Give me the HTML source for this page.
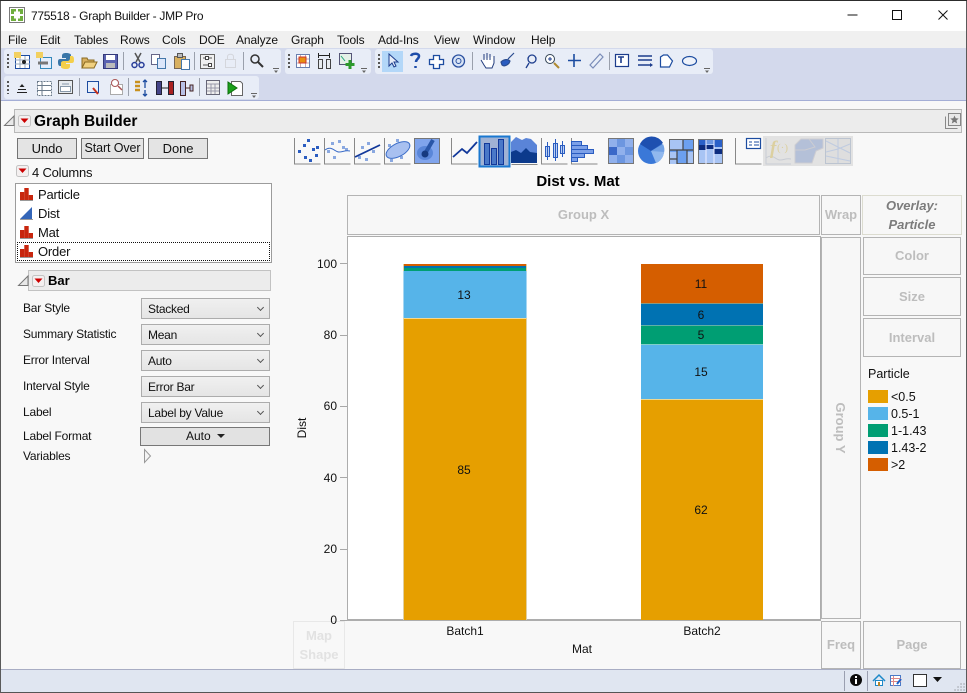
<!DOCTYPE html>
<html><head><meta charset="utf-8"><title>775518 - Graph Builder - JMP Pro</title>
<style>
html,body{margin:0;padding:0;width:967px;height:693px;overflow:hidden;background:#f8f8f8}
body{position:relative;font:12px/16px "Liberation Sans",sans-serif;color:#111}
div,span.t{position:absolute;box-sizing:border-box;white-space:nowrap}
.m{top:32px;font-size:12px;line-height:16px;color:#111;letter-spacing:-.1px}
.bar{background:#e8edf7;border-radius:3px}
.btn{background:#e4e4e4;border:1px solid #747474;text-align:center;font-size:13px;line-height:19px;height:21px;top:138px;letter-spacing:-.1px}
.lb{left:23px;font-size:12px;line-height:14px;letter-spacing:-.2px}
.cb{left:141px;width:129px;height:21px;border:1px solid #acacac;background:linear-gradient(#f0f0f0,#e5e5e5);padding-left:6px;line-height:20px;font-size:12px;letter-spacing:-.25px}
.cb i{position:absolute;right:6px;top:6px;width:4px;height:4px;border-right:1px solid #555;border-bottom:1px solid #555;transform:rotate(45deg)}
.z{border:1px solid #b4b4b4;background:#f7f7f7;text-align:center;color:#bdbdbd;font-weight:bold;font-size:13px}
.row{left:38px;font-size:13px;line-height:16px;letter-spacing:-.2px}
.tk{font-size:12px;line-height:14px;text-align:right;width:30px;left:307px}
.v{font-size:12px;line-height:14px;text-align:center;width:40px}
.lg{left:891px;font-size:12.500px;line-height:14px}
.sw{left:868px;width:20px;height:13px}
</style></head><body>
<div style="left:0;top:0;width:967px;height:1px;background:#2c2c2c"></div>
<div style="left:0;top:1px;width:967px;height:30px;background:#fff"></div>
<div style="left:31px;top:8px;font-size:12px;line-height:16px;color:#111;letter-spacing:-.28px">775518 - Graph Builder - JMP Pro</div>
<div style="left:0;top:31px;width:967px;height:17px;background:#f0f0f0"></div>
<div class="m" style="left:8px">File</div><div class="m" style="left:40px">Edit</div><div class="m" style="left:74px">Tables</div><div class="m" style="left:120px">Rows</div><div class="m" style="left:162px">Cols</div><div class="m" style="left:199px">DOE</div><div class="m" style="left:236px">Analyze</div><div class="m" style="left:291px">Graph</div><div class="m" style="left:337px">Tools</div><div class="m" style="left:378px">Add-Ins</div><div class="m" style="left:434px">View</div><div class="m" style="left:473px">Window</div><div class="m" style="left:531px">Help</div>
<div style="left:0;top:48px;width:967px;height:52px;background:#d3d9ec"></div>
<div style="left:0;top:100px;width:967px;height:1px;background:#a4aed6"></div>
<div class="bar" style="left:4px;top:49px;width:277px;height:25px"></div>
<div class="bar" style="left:285px;top:49px;width:86px;height:25px"></div>
<div class="bar" style="left:375px;top:49px;width:338px;height:25px"></div>
<div class="bar" style="left:4px;top:76px;width:255px;height:23px"></div>
<div style="left:382px;top:51px;width:21px;height:21px;background:#b3d7f8"></div>

<!-- report -->
<div style="left:14px;top:109px;width:948px;height:24px;background:#ececec;border:1px solid #b9b9b9"></div>
<div style="left:34px;top:113px;font-size:15.500px;line-height:17px;font-weight:bold;color:#000">Graph Builder</div>
<div class="btn" style="left:17px;width:60px">Undo</div>
<div class="btn" style="left:81px;width:63px;font-size:12.500px">Start Over</div>
<div class="btn" style="left:148px;width:60px">Done</div>
<div style="left:32px;top:165px;font-size:13px;line-height:16px;letter-spacing:-.2px">4 Columns</div>
<div style="left:15px;top:183px;width:257px;height:80px;background:#fff;border:1px solid #9c9c9c"></div>
<div style="left:17px;top:242px;width:253px;height:19px;border:1px dotted #111"></div>
<div class="row" style="top:187px">Particle</div><div class="row" style="top:206px">Dist</div><div class="row" style="top:225px">Mat</div><div class="row" style="top:244px">Order</div>
<div style="left:28px;top:270px;width:243px;height:21px;background:#ececec;border:1px solid #c2c2c2"></div>
<div style="left:48px;top:273px;font-size:13px;line-height:16px;font-weight:bold;color:#000">Bar</div>
<div class="lb" style="top:301px">Bar Style</div><div class="lb" style="top:327px">Summary Statistic</div><div class="lb" style="top:353px">Error Interval</div><div class="lb" style="top:379px">Interval Style</div><div class="lb" style="top:405px">Label</div><div class="lb" style="top:429px">Label Format</div><div class="lb" style="top:449px">Variables</div>
<div class="cb" style="top:298px">Stacked<i></i></div>
<div class="cb" style="top:324px">Mean<i></i></div>
<div class="cb" style="top:350px">Auto<i></i></div>
<div class="cb" style="top:376px">Error Bar<i></i></div>
<div class="cb" style="top:402px">Label by Value<i></i></div>
<div style="left:140px;top:427px;width:130px;height:19px;background:#e2e2e2;border:1px solid #777;font-size:12px;line-height:17px;padding-left:45px">Auto</div>

<!-- graph frame -->
<div style="left:520px;top:173px;width:116px;text-align:center;font-size:15px;line-height:17px;font-weight:bold;color:#000">Dist vs. Mat</div>
<div class="z" style="left:347px;top:195px;width:473px;height:40px;line-height:38px">Group X</div>
<div class="z" style="left:821px;top:195px;width:40px;height:40px;line-height:38px">Wrap</div>
<div class="z" style="left:862px;top:195px;width:100px;height:40px;border-color:#dcdcd0;color:#7c7c7c;font-style:italic;line-height:19px">Overlay:<br>Particle</div>
<div style="left:347px;top:236px;width:474px;height:385px;background:#fff;border:1px solid #adadad;border-bottom-width:2px"></div>
<div class="z" style="left:821px;top:237px;width:40px;height:382px"></div>
<div style="left:840px;top:408px;width:0;height:0"><span class="t" style="left:-30px;top:20px;width:60px;text-align:center;color:#bdbdbd;font-weight:bold;font-size:13px;line-height:14px;transform:translateY(-7px) rotate(90deg)">Group Y</span></div>
<div class="z" style="left:863px;top:237px;width:98px;height:38px;line-height:36px">Color</div>
<div class="z" style="left:863px;top:277px;width:98px;height:39px;line-height:37px">Size</div>
<div class="z" style="left:863px;top:318px;width:98px;height:39px;line-height:37px">Interval</div>
<div class="z" style="left:821px;top:621px;width:40px;height:48px;line-height:46px">Freq</div>
<div class="z" style="left:863px;top:621px;width:98px;height:48px;line-height:46px">Page</div>
<div class="z" style="left:293px;top:621px;width:52px;height:48px;border-color:#e8e8e8;color:#e2e2e2;line-height:19px;padding-top:4px;background:#f8f8f8">Map<br>Shape</div>

<!-- bars -->
<div style="left:403px;top:264px;width:124px;height:356px;background:#e0cfa0"></div>
<div style="left:404px;top:264px;width:122px;height:3px;background:#d55e00"></div>
<div style="left:404px;top:266px;width:122px;height:2px;background:#0072b2"></div>
<div style="left:404px;top:268px;width:122px;height:3px;background:#009e73"></div>
<div style="left:403px;top:271px;width:124px;height:47px;background:#a6d6f2"></div>
<div style="left:404px;top:271px;width:122px;height:47px;background:#56b4e9"></div>
<div style="left:403px;top:318px;width:124px;height:1px;background:#f4d890"></div>
<div style="left:404px;top:319px;width:122px;height:301px;background:#e69f00"></div>
<div style="left:641px;top:264px;width:122px;height:39px;background:#d55e00"></div>
<div style="left:641px;top:303px;width:122px;height:1px;background:#8a9a80"></div>
<div style="left:641px;top:304px;width:122px;height:21px;background:#0072b2"></div>
<div style="left:641px;top:325px;width:122px;height:1px;background:#60b0a8"></div>
<div style="left:641px;top:326px;width:122px;height:18px;background:#009e73"></div>
<div style="left:641px;top:344px;width:122px;height:1px;background:#80cfc8"></div>
<div style="left:641px;top:345px;width:122px;height:54px;background:#56b4e9"></div>
<div style="left:641px;top:399px;width:122px;height:1px;background:#f0d890"></div>
<div style="left:641px;top:400px;width:122px;height:220px;background:#e69f00"></div>
<div class="v" style="left:444px;top:288px">13</div><div class="v" style="left:444px;top:463px">85</div>
<div class="v" style="left:681px;top:277px">11</div><div class="v" style="left:681px;top:308px">6</div><div class="v" style="left:681px;top:328px">5</div><div class="v" style="left:681px;top:365px">15</div><div class="v" style="left:681px;top:503px">62</div>
<div class="tk" style="top:257px">100</div><div class="tk" style="top:328px">80</div><div class="tk" style="top:399px">60</div><div class="tk" style="top:471px">40</div><div class="tk" style="top:542px">20</div><div class="tk" style="top:613px">0</div>
<div style="left:340px;top:263px;width:7px;height:1px;background:#a8a8a8"></div><div style="left:340px;top:335px;width:7px;height:1px;background:#a8a8a8"></div><div style="left:340px;top:406px;width:7px;height:1px;background:#a8a8a8"></div><div style="left:340px;top:477px;width:7px;height:1px;background:#a8a8a8"></div><div style="left:340px;top:549px;width:7px;height:1px;background:#a8a8a8"></div><div style="left:340px;top:620px;width:7px;height:1px;background:#a8a8a8"></div>
<div style="left:282px;top:421px;width:40px;text-align:center;font-size:12px;line-height:14px;transform:rotate(-90deg)">Dist</div>
<div class="v" style="left:445px;top:624px">Batch1</div><div class="v" style="left:682px;top:624px">Batch2</div><div class="v" style="left:562px;top:642px">Mat</div>
<div style="left:868px;top:367px;font-size:12.500px;line-height:14px">Particle</div>
<div class="sw" style="top:390px;background:#e69f00"></div><div class="sw" style="top:407px;background:#56b4e9"></div><div class="sw" style="top:424px;background:#009e73"></div><div class="sw" style="top:441px;background:#0072b2"></div><div class="sw" style="top:458px;background:#d55e00"></div>
<div class="lg" style="top:390px">&lt;0.5</div><div class="lg" style="top:407px">0.5-1</div><div class="lg" style="top:424px">1-1.43</div><div class="lg" style="top:441px">1.43-2</div><div class="lg" style="top:458px">&gt;2</div>

<!-- status -->
<div style="left:0;top:669px;width:967px;height:1px;background:#a8adc4"></div>
<div style="left:0;top:670px;width:967px;height:22px;background:#e0e6f1"></div>
<div style="left:0;top:692px;width:967px;height:1px;background:#555"></div>
<div style="left:844px;top:671px;width:1px;height:20px;background:#9a9fb0"></div>
<div style="left:867px;top:671px;width:1px;height:20px;background:#9a9fb0"></div>
<div style="left:913px;top:674px;width:14px;height:13px;background:#fff;border:1px solid #333"></div>
<div style="left:0;top:1px;width:1px;height:692px;background:#5a5a5a"></div>
<div style="left:966px;top:1px;width:1px;height:692px;background:#5a5a5a"></div>

<svg width="967" height="693" viewBox="0 0 967 693" style="position:absolute;left:0;top:0" fill="none">
<defs>
<g id="nom"><rect x="0" y="4" width="4.300" height="8" fill="#c8260e"/><rect x="4.300" y="0" width="4.400" height="12" fill="#c8260e"/><rect x="8.700" y="7" width="4.300" height="5" fill="#c8260e"/><path d="M0 12.500h13" stroke="#999"/></g>
<g id="red"><rect x=".5" y=".5" width="12" height="11" rx="2" fill="#f4f0f0" stroke="#c4c4c4"/><path d="M2.500 3.500h8l-4 4.500z" fill="#c00"/></g>
<g id="tri"><path d="M.5 10.500h9.500v-9.500z" fill="#e8e8e8" stroke="#777"/></g>
</defs>
<!-- logo -->
<rect x="9.500" y="7.500" width="15" height="15" fill="#fff" stroke="#7a7a7a"/>
<path d="M11 9h5v2.500h-2v2.500h-3zM18 9h5v5h-3v-2.500h-2zM11 16h3v2.500h2v2.500h-5zM20 16h3v5h-5v-2.500h2z" fill="#6fae3e"/>
<!-- window controls -->
<path d="M847.500 15h10" stroke="#111"/><rect x="892.500" y="10.500" width="9" height="9" stroke="#111"/><path d="M938.500 10.500l9 9M947.500 10.500l-9 9" stroke="#111"/>
<!-- grips -->
<path d="M8 54v15M289 54v15M379 54v15M8 81v13" stroke="#555" stroke-width="2" stroke-dasharray="2 2"/>
<!-- dropdown chevrons -->
<path d="M273 68.500h6M361 68.500h6M704 68.500h6M251 93.500h6" stroke="#666"/>
<path d="M274 70.500h4l-2 2.500zM362 70.500h4l-2 2.500zM705 70.500h4l-2 2.500zM252 95.500h4l-2 2.500z" fill="#666"/>
<!-- seps -->
<path d="M123.500 52v18M194.500 52v18M243.500 52v18M472.500 52v18M609.500 52v18M79.500 78v18M128.500 78v18M199.500 78v18" stroke="#9aa0ac"/>
<!-- row1 icons -->
<rect x="15.500" y="55.500" width="14" height="13" fill="#fff" stroke="#1c4ca0"/><path d="M15 60h15M20 56v12M25 56v12M15 64h15" stroke="#9ab"/><rect x="14" y="52" width="7" height="6" fill="#f2d060"/><circle cx="24" cy="62" r="2" fill="#222"/>
<rect x="40.500" y="57.500" width="11" height="11" fill="#e4eefc" stroke="#38b"/><rect x="36" y="52" width="7" height="6" fill="#f2d060"/><path d="M38 63h10" stroke="#777" stroke-width="3"/>
<path d="M66 53c-3 0-4 1-4 3v2h4v1h-6c-2 0-2 2-2 3s0 4 2 4h2v-2c0-2 1-3 3-3h3c2 0 3-1 3-2v-4c0-1-2-2-5-2z" fill="#3a76a8"/><path d="M66 69c3 0 4-1 4-3v-2h-4v-1h6c2 0 2-2 2-3s0-4-2-4h-2v2c0 2-1 3-3 3h-3c-2 0-3 1-3 2v4c0 1 2 2 5 2z" fill="#f4cf4a"/>
<path d="M82 68v-10h5l1 2h6v8z" fill="#d8b060" stroke="#8a6a20"/><path d="M82 68l3-6h12l-3 6z" fill="#f0d080" stroke="#8a6a20"/>
<rect x="103.500" y="54.500" width="14" height="14" fill="#5a62b0" stroke="#34397a"/><rect x="106" y="55" width="9" height="5" fill="#fff"/><rect x="106" y="63" width="9" height="5" fill="#bbb"/>
<path d="M135 53l5 9M141 53l-5 9" stroke="#555" stroke-width="1.500"/><circle cx="134.500" cy="65" r="2.500" stroke="#2a3f9a" stroke-width="1.500"/><circle cx="141.500" cy="65" r="2.500" stroke="#2a3f9a" stroke-width="1.500"/>
<rect x="151.500" y="54.500" width="8" height="10" fill="#fff" stroke="#668"/><rect x="157.500" y="58.500" width="8" height="10" fill="#dbe6fa" stroke="#47a"/>
<rect x="174.500" y="56.500" width="11" height="12" fill="#d8b060" stroke="#765"/><rect x="177.500" y="53.500" width="5" height="4" fill="#bbb" stroke="#555"/><rect x="181.500" y="59.500" width="8" height="10" fill="#fff" stroke="#47a"/>
<rect x="200.500" y="54.500" width="14" height="14" fill="#f0f0f0" stroke="#666"/><path d="M203 58h9M203 65h9" stroke="#555"/><rect x="205.500" y="56.500" width="3" height="3" fill="#fff" stroke="#444"/><rect x="208.500" y="63.500" width="3" height="3" fill="#fff" stroke="#444"/>
<rect x="225.500" y="59.500" width="10" height="8" stroke="#d4d6dc"/><path d="M227.500 59v-2.500c0-3 6-3 6 0v2.500" stroke="#d4d6dc"/>
<circle cx="255" cy="59" r="4" stroke="#333" stroke-width="1.500"/><path d="M258 62l5 5" stroke="#333" stroke-width="2"/>
<rect x="296.500" y="54.500" width="13" height="13" fill="#fff" stroke="#6a7fb0"/><path d="M297 59h12M297 63h12M300.500 55v12M305.500 55v12" stroke="#caa"/><rect x="299" y="57" width="7" height="6" fill="#e89010" stroke="#c33"/>
<path d="M318.500 59.500h4v9h-4zM326.500 59.500h4v9h-4z" fill="#e8ecf0" stroke="#444"/><path d="M318 55.500h12M318.500 53v5M329.500 53v5" stroke="#222"/>
<rect x="339.500" y="53.500" width="12" height="11" fill="#e4f0e8" stroke="#557"/><path d="M341 56l4 5" stroke="#2a7"/><path d="M350 60v9M345.500 64.500h9" stroke="#2c9a2c" stroke-width="3"/>
<!-- third strip -->
<path d="M389 54v12l3-3 2 4 2-1-2-4h4z" fill="#e6ecf8" stroke="#1c3c8c"/>
<path d="M411 56c1-3 8-3 8 0 0 3-3 3-3 6M415.500 66v2" stroke="#1c4caa" stroke-width="2.500"/>
<path d="M433.500 55.500h6v4h4v5h-4v4h-6v-4h-4v-5h4z" fill="#fff" stroke="#1c4ca0" stroke-width="1.300"/>
<circle cx="458.500" cy="61" r="6" fill="#d8e4f6" stroke="#2a50a0" stroke-width="1.300"/><circle cx="458.500" cy="61" r="2.500" stroke="#2a50a0"/>
<path d="M481 60l3 5 2 3h6l2-5v-7M484 60v-6M487 60v-7M490 60v-6" stroke="#223c7c" fill="#fff"/>
<path d="M501 62c3-3 7-3 9-1-1 4-6 6-8 4zM508 59l6-6" fill="#2a5cc0" stroke="#2a4c90" stroke-width="1.200"/>
<circle cx="532" cy="59" r="4" stroke="#1c3c8c" stroke-width="1.300"/><path d="M529 63l-3 5" stroke="#1c3c8c" stroke-width="1.300"/>
<circle cx="550" cy="59" r="4.500" fill="#fff" stroke="#345"/><path d="M548 59h4M550 57v4" stroke="#1c3c8c"/><path d="M554 63l5 5" stroke="#b08a30" stroke-width="2"/>
<path d="M574 54v13M568 60.500h13" stroke="#1c4ca0" stroke-width="1.600"/>
<path d="M590 65l10-11 3 3-10 11z" fill="#e8eef8" stroke="#7a8cb8" stroke-width="1.200"/>
<rect x="615.500" y="54.500" width="13" height="12" fill="#fff" stroke="#1c3c8c" stroke-width="1.200"/><path d="M618 57h6M621 57v6" stroke="#1c3c8c" stroke-width="1.600"/>
<path d="M638 56h14M638 60h14M638 65h12" stroke="#1c3c8c" stroke-width="1.600"/><path d="M650 63l3 2-3 2z" fill="#1c3c8c"/>
<path d="M660.500 67v-10l3-2h4l5 6-3 6z" fill="#fff" stroke="#1c4ca0" stroke-width="1.200"/>
<ellipse cx="689.500" cy="61" rx="7" ry="4.500" fill="#eef2fa" stroke="#1c4ca0" stroke-width="1.200"/>
<!-- row 2 -->
<path d="M22 84l-2.500 3h5z" fill="#222"/><path d="M18 89.500h8M17 92.500h10" stroke="#222"/>
<path d="M37.500 81.500h14v14h-14z" fill="#fff" stroke="#6a7a8a" stroke-dasharray="2 1"/><path d="M42 81v14M37 85.500h14M37 90.500h14" stroke="#6a7a8a"/>
<rect x="58.500" y="80.500" width="14" height="13" fill="#e8ecf0" stroke="#555"/><rect x="60.500" y="86.500" width="10" height="5" fill="#fff" stroke="#89a"/><path d="M62 84h7" stroke="#89a"/>
<rect x="87.500" y="81.500" width="11" height="11" fill="#e8f0fb" stroke="#1c4ca0"/><path d="M93 88l5 6" stroke="#c8321c" stroke-width="2"/>
<rect x="110.500" y="84.500" width="12" height="10" fill="#fff" stroke="#aaa"/><circle cx="115" cy="83" r="3.500" fill="#fff" stroke="#a55"/><path d="M118 86l4 4" stroke="#a55" stroke-width="1.500"/>
<path d="M135 82h5M135 86h5M135 90h5" stroke="#c8901c" stroke-width="2.500"/><path d="M145 80v8M145 90v6M143 82l2-2 2 2M143 94l2 2 2-2" stroke="#1c4ca0" stroke-width="1.300"/>
<rect x="156.500" y="81.500" width="5" height="13" fill="#448" stroke="#223"/><rect x="168.500" y="81.500" width="5" height="13" fill="#a22" stroke="#223"/><path d="M161 88h8" stroke="#222"/>
<path d="M180.500 81.500h5v14h-5zM186 88h4v-3h3v6h-3v-3" stroke="#422" fill="#b8c0e4"/>
<rect x="206.500" y="80.500" width="13" height="14" fill="#eee" stroke="#667"/><path d="M207 84h12M211 84v10M215 84v10M207 88h12M207 91h12" stroke="#99a"/>
<path d="M231.500 81.500h9l2 2v12h-11z" fill="#fff" stroke="#666"/><path d="M228 82l9 6-9 6z" fill="#1ca01c" stroke="#0a700a"/>
<!-- Report icons -->
<use href="#tri" x="4" y="115"/><use href="#tri" x="18" y="275"/>
<use href="#red" x="18" y="115"/><use href="#red" x="32" y="275"/><use href="#red" x="16" y="165"/>
<use href="#nom" x="20" y="188"/><use href="#nom" x="20" y="226"/><use href="#nom" x="20" y="245"/>
<path d="M20 219l12-12v12z" fill="#3466b8"/><path d="M20 219.500h13" stroke="#999"/>
<path d="M217 434h8l-4 4z" fill="#222"/>
<path d="M144.500 449.500v13l6-6.500z" fill="#f4f4f4" stroke="#999"/>
<!-- star icon -->
<rect x="948.500" y="113.500" width="12" height="12" fill="#e8e8e8" stroke="#888"/><path d="M945.500 116.500v12h12" stroke="#888"/><path d="M954.500 115.500l1.200 2.800 3 .2-2.300 2 .8 3-2.700-1.600-2.700 1.600.8-3-2.300-2 3-.2z" fill="#777"/>
<!-- graph element icons -->
<path d="M294.500 138v26h26M324.500 138v26h26M354.500 138v26h26M384.500 138v26h26M451.500 138v26h26M511.500 164.500h26M541.500 138v26h26M571.500 138v26h26M735.500 138v26h26" stroke="#888"/>
<g fill="#2a5cc0"><rect x="298" y="150" width="3" height="3"/><rect x="303" y="144" width="3" height="3"/><rect x="307" y="139" width="3" height="3"/><rect x="312" y="148" width="3" height="3"/><rect x="316" y="146" width="3" height="3"/><rect x="304" y="156" width="3" height="3"/><rect x="309" y="159" width="3" height="3"/><rect x="315" y="154" width="3" height="3"/></g>
<g fill="#8aa8e0"><rect x="327" y="150" width="3" height="3"/><rect x="331" y="142" width="3" height="3"/><rect x="338" y="140" width="3" height="3"/><rect x="342" y="146" width="3" height="3"/><rect x="333" y="156" width="3" height="3"/><rect x="345" y="148" width="3" height="3"/><rect x="358" y="156" width="3" height="3"/><rect x="361" y="146" width="3" height="3"/><rect x="367" y="142" width="3" height="3"/><rect x="365" y="158" width="3" height="3"/><rect x="372" y="150" width="3" height="3"/><rect x="388" y="144" width="3" height="3"/><rect x="396" y="139" width="3" height="3"/><rect x="400" y="156" width="3" height="3"/><rect x="390" y="159" width="3" height="3"/></g>
<path d="M325 150c6-5 10 2 14 2s6-2 11-1" stroke="#3a6cc8"/>
<path d="M355 157l25-12" stroke="#12389a" stroke-width="1.800"/>
<ellipse cx="398" cy="150" rx="13" ry="6.500" transform="rotate(-28 398 150)" fill="#a8c0f0" stroke="#3a6cc8"/>
<rect x="414.500" y="138.500" width="25" height="25" fill="#80a4ec" stroke="#777"/><ellipse cx="425" cy="153" rx="8" ry="7" fill="#5a86d8"/><path d="M426 152l7-12" stroke="#2a56a8" stroke-width="4"/><circle cx="425" cy="154" r="3.500" fill="#163a80"/>
<path d="M453 157l9-8 5 4 10-11" stroke="#12389a" stroke-width="1.800"/>
<rect x="479.500" y="136.500" width="30" height="30" fill="#a0b2d4" stroke="#1a78d0" stroke-width="2"/>
<g fill="#4a78c8" stroke="#12389a"><rect x="484.500" y="143.500" width="5" height="21"/><rect x="491.500" y="148.500" width="5" height="16"/><rect x="498.500" y="139.500" width="5" height="25"/></g>
<path d="M511 142l5-5 6 3 4-2 5 1 6 6v18h-26z" fill="#5a84d8"/><path d="M511 152l5-2 5 3 5-5 4 4 7 1v10h-26z" fill="#0c3a8c"/>
<g fill="#bcd0f4" stroke="#2a5cc0"><rect x="545.500" y="146.500" width="4" height="10"/><rect x="553.500" y="143.500" width="4" height="14"/><rect x="560.500" y="145.500" width="4" height="8"/></g><path d="M547.500 142v18M555.500 139v22M562.500 141v16" stroke="#2a5cc0"/>
<g fill="#7ca0e8" stroke="#2a5cc0"><rect x="571.500" y="141.500" width="10" height="4"/><rect x="571.500" y="145.500" width="16" height="4"/><rect x="571.500" y="149.500" width="22" height="4"/><rect x="571.500" y="153.500" width="13" height="4"/><rect x="571.500" y="157.500" width="6" height="4"/></g>
<rect x="608.500" y="138.500" width="25" height="25" fill="#5a84d8" stroke="#777"/><path d="M609 139h8v8h-8zM625 139h8v8h-8zM617 147h8v8h-8zM609 155h8v8h-8zM625 155h8v8h-8z" fill="#90b0ec"/><path d="M617 139h8v8h-8zM625 147h8v8h-8zM617 155h8v8h-8z" fill="#6c96e0"/><path d="M609 147h8v8h-8z" fill="#3a68c8"/>
<circle cx="651" cy="151" r="13" fill="#3a78d8"/><path d="M651 151l-11-7a13 13 0 0 1 23-1z" fill="#1e50b0"/><path d="M651 151l12-7a13 13 0 0 1 1 9z" fill="#70a0e4"/><path d="M651 151l13 1a13 13 0 0 1-8 11z" fill="#90b8ee"/>
<rect x="669.500" y="139.500" width="24" height="24" fill="#6ca0f0" stroke="#666"/><path d="M670 140h13v10h-13zM670 152h7v12h-7zM687 152h6v11h-6z" fill="#a8c4f4"/><path d="M683 140v10M670 150h23M677 150v14M687 150v14M670 159h7" stroke="#444" stroke-width="1.200"/>
<rect x="698.500" y="139.500" width="24" height="24" fill="#a8c4f4" stroke="#777"/><path d="M699 140h7v8h-7zM714 140h8v7h-8z" fill="#2a60c8"/><path d="M706 140h8v4h-8z" fill="#6c96e0"/><path d="M699 145h7v5h-7zM706 145h8v4h-8zM714 149h8v5h-8z" fill="#0c2c80"/><path d="M706 140v24M714 140v24" stroke="#eef"/>
<rect x="746.500" y="138.500" width="14" height="10" fill="#fff" stroke="#1c4ca0" stroke-width="1.200"/><path d="M749 142h3M749 145h3M754 142h5M754 145h5" stroke="#1c4ca0"/>
<rect x="763" y="136" width="90" height="30" fill="#e2e2e2"/>
<path d="M766 158c6-5 10 2 14 2s6-2 11-1M766 138v26h25" stroke="#c8ccd4"/>
<text x="770" y="154" font-family="Liberation Serif, serif" font-style="italic" font-weight="bold" font-size="19" fill="#dcd0a0">f</text><text x="777" y="151" font-family="Liberation Serif, serif" font-size="11" fill="#dcd0a0">(·)</text>
<path d="M795 145l6-6h22v9l-7 3-4 12h-17z" fill="#b4c0d8" stroke="#cdcdd2"/><path d="M809 139l6 8-10 3-10 0" stroke="#cdcdd2"/>
<rect x="825.500" y="138.500" width="25" height="25" fill="#dedede" stroke="#bcc4d0"/><path d="M826 141l24 12M826 152l12-3 12-5M838 139v24M826 156l24 5" stroke="#bfcbe0"/>
<!-- status -->
<circle cx="856" cy="680" r="6" fill="#0a0a0a"/><rect x="855" y="679" width="2" height="5" fill="#fff"/><rect x="855" y="676" width="2" height="2" fill="#fff"/>
<path d="M873 681l6-6 6 6" stroke="#1c88c8" stroke-width="1.500"/><rect x="875.500" y="680.500" width="7" height="5" fill="#fff" stroke="#1c88c8"/><rect x="878" y="682" width="2" height="4" fill="#b8862c"/>
<rect x="890.500" y="675.500" width="10" height="10" fill="#fff" stroke="#4a7ac8"/><path d="M891 678.500h10M891 681.500h10M893.500 676v10" stroke="#d88"/><path d="M897 684l4-5" stroke="#1c60c8" stroke-width="2"/>
<path d="M933 677h9l-4.500 5z" fill="#111"/>
<path d="M964 690h.1M961 690h.1M958 690h.1M964 687h.1M961 687h.1M964 684h.1M955 690h.1M958 687h.1M961 684h.1" stroke="#b0b4bc" stroke-width="1.500" stroke-linecap="square"/>
</svg>
</body></html>
